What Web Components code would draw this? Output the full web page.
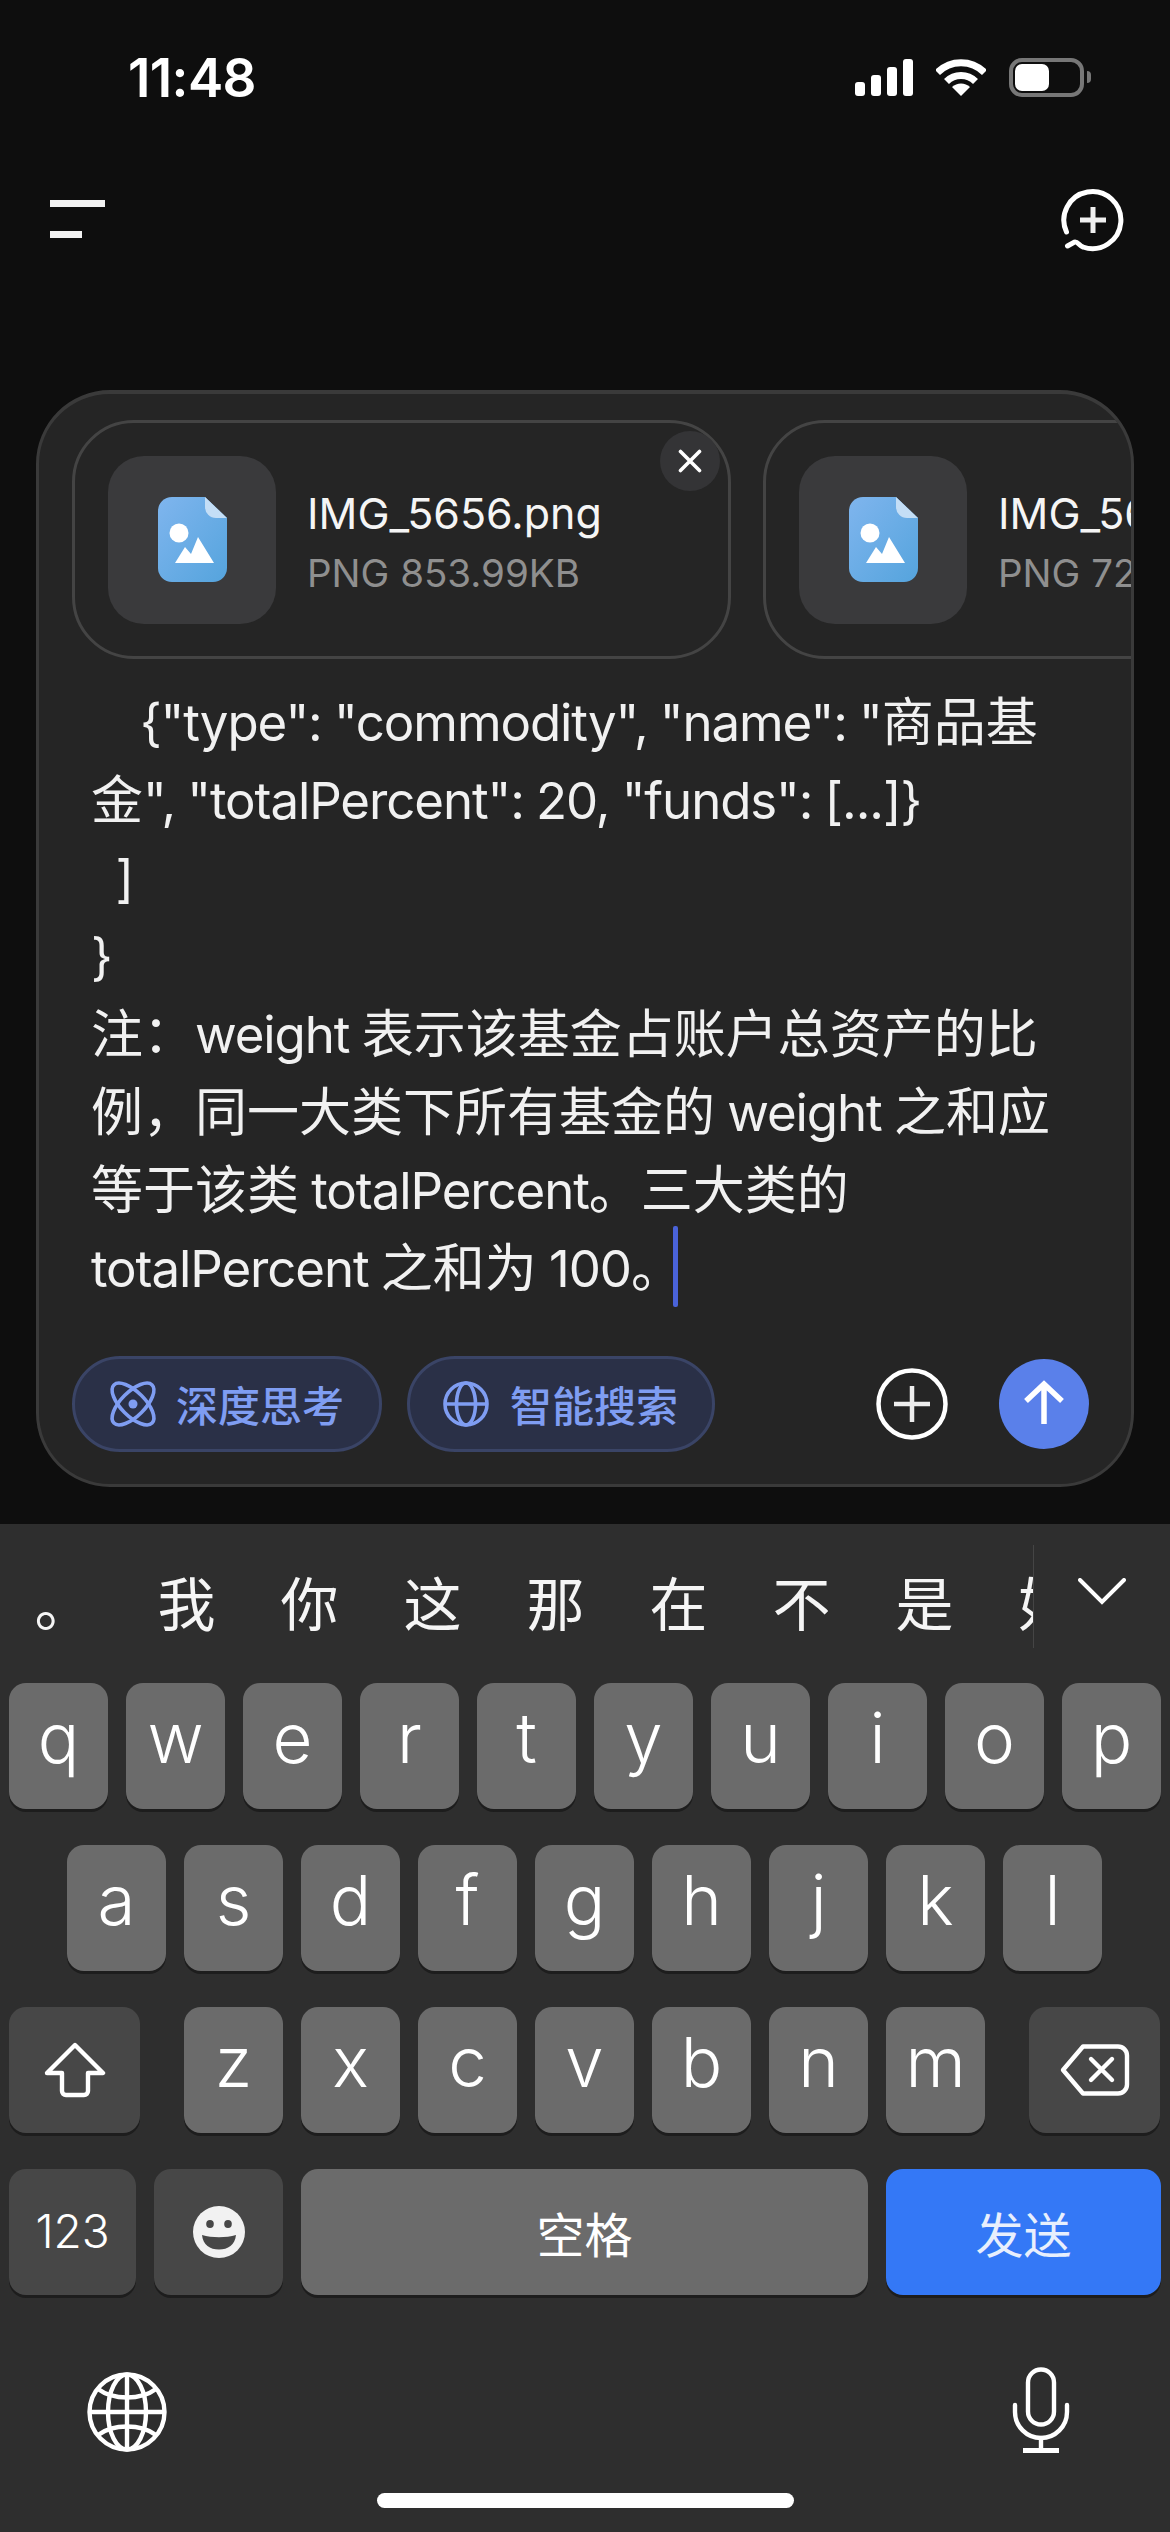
<!DOCTYPE html>
<html lang="zh">
<head>
<meta charset="utf-8">
<title>Chat composer</title>
<style>
  html, body { margin: 0; background: #0e0e0e; }
  body {
    width: 1170px;
    height: 2532px;
    overflow: hidden;
    display: flex;
    flex-direction: column;
    font-family: Inter, "Noto Sans CJK SC", sans-serif;
    color: #fff;
  }
</style>
</head>
<body>
<status-bar time="11:48"></status-bar>
<top-nav></top-nav>
<chat-composer>
  <file-card slot="files" name="IMG_5656.png" meta="PNG 853.99KB" closable></file-card>
  <file-card slot="files" name="IMG_5657.png" meta="PNG 723.41KB"></file-card>
  <tool-chip slot="tools" icon="atom" style="--w:310px">深度思考</tool-chip>
  <tool-chip slot="tools" icon="globe" style="--w:308px">智能搜索</tool-chip>
</chat-composer>
<soft-keyboard></soft-keyboard>

<script>
const promptLines = [
  '    {"type": "commodity", "name": "商品基',
  '金", "totalPercent": 20, "funds": [...]}',
  '  ]',
  '}',
  '注：weight 表示该基金占账户总资产的比',
  '例，同一大类下所有基金的 weight 之和应',
  '等于该类 totalPercent。三大类的',
  'totalPercent 之和为 100。'
];

const icons = {
  atom: `<svg width="44" height="44" viewBox="0 0 44 44" fill="none" stroke="currentColor" stroke-width="3.6">
    <ellipse cx="22" cy="22" rx="27" ry="12" transform="rotate(45 22 22)"/>
    <ellipse cx="22" cy="22" rx="27" ry="12" transform="rotate(-45 22 22)"/>
    <circle cx="22" cy="22" r="4.5" fill="currentColor" stroke="none"/></svg>`,
  globe: `<svg width="46" height="46" viewBox="0 0 46 46" fill="none" stroke="currentColor" stroke-width="3.6">
    <circle cx="23" cy="23" r="21"/><ellipse cx="23" cy="23" rx="9.5" ry="21"/><path d="M2 23h42"/></svg>`,
  earth: `<svg width="80" height="80" viewBox="0 0 80 80" fill="none" stroke="#fff" stroke-width="4.4">
    <circle cx="40" cy="40" r="37.5"/><ellipse cx="40" cy="40" rx="19" ry="37.5"/><path d="M40 2.5v75M2.5 40h75"/>
    <path d="M11 17c8 6 18 8.5 29 8.5s21-2.5 29-8.5M11 63c8-6 18-8.5 29-8.5s21 2.5 29 8.5"/></svg>`,
  mic: `<svg width="58" height="86" viewBox="0 0 58 86" fill="none" stroke="#fff" stroke-width="4.4" stroke-linecap="round">
    <rect x="16" y="2.5" width="26" height="55" rx="13"/><path d="M3 38v7a26 26 0 0 0 52 0v-7"/>
    <path d="M29 71v12"/><path d="M11 83.5h36" stroke-width="4.8" stroke-linecap="butt"/></svg>`,
  shift: `<svg width="62" height="56" viewBox="0 0 62 56" fill="none" stroke="#fff" stroke-width="4.4" stroke-linejoin="round">
    <path d="M31 3 59 31H44V49a4 4 0 0 1-4 4H22a4 4 0 0 1-4-4V31H3Z"/></svg>`,
  del: `<svg width="70" height="52" viewBox="0 0 70 52" fill="none" stroke="#fff" stroke-width="4.4" stroke-linecap="round" stroke-linejoin="round">
    <path d="M23 2.5H58a9 9 0 0 1 9 9v29a9 9 0 0 1-9 9H23L3 26Z"/><path d="M31 15l21 21M52 15 31 36"/></svg>`,
  smile: `<svg width="52" height="52" viewBox="0 0 52 52"><circle cx="26" cy="26" r="26" fill="#f2f2f2"/>
    <ellipse cx="17" cy="18" rx="3.8" ry="4" fill="#474747"/><ellipse cx="35" cy="18" rx="3.8" ry="4" fill="#474747"/>
    <path d="M9 29c10 3 24 3 34 0-1 10-8 14.5-17 14.5S10 39 9 29Z" fill="#474747"/></svg>`
};

class StatusBar extends HTMLElement {
  connectedCallback() {
    if (this.shadowRoot) return;
    this.attachShadow({ mode: 'open' }).innerHTML = `
      <style>
        :host { display: flex; align-items: center; height: 154px; flex: none; padding: 0 79px 0 128px; box-sizing: border-box; }
        .time { font: 600 53px/1 Inter, sans-serif; letter-spacing: -0.6px; margin: 2px auto 0 0; color: #fff; }
        .icons { display: flex; align-items: center; }
        svg { display: block; }
        .wifi { margin: 0 23px; }
        .battery { width: 75px; height: 39px; box-sizing: border-box; border: 4px solid #777; border-radius: 13px; padding: 2px; }
        .battery i { display: block; width: 34px; height: 27px; background: #fff; border-radius: 7px; }
        .nub { width: 4px; height: 12px; margin-left: 3px; background: #777; border-radius: 0 4px 4px 0; }
      </style>
      <span class="time">${this.getAttribute('time')}</span>
      <div class="icons">
        <svg width="58" height="37" viewBox="0 0 58 37" fill="#fff">
          <rect x="0" y="23" width="10" height="14" rx="3"/><rect x="16" y="16" width="10" height="21" rx="3"/>
          <rect x="32" y="8" width="10" height="29" rx="3"/><rect x="48" y="0" width="10" height="37" rx="3"/>
        </svg>
        <svg class="wifi" width="50" height="38" viewBox="0 0 50 38" fill="none" stroke="#fff" stroke-width="7">
          <path d="M1.5 14.5a33 33 0 0 1 47 0M10.5 23.5a20.5 20.5 0 0 1 29 0"/>
          <path d="M25 38 16 29a13 13 0 0 1 18 0Z" fill="#fff" stroke="none"/>
        </svg>
        <div class="battery"><i></i></div><div class="nub"></div>
      </div>`;
  }
}

class TopNav extends HTMLElement {
  connectedCallback() {
    if (this.shadowRoot) return;
    this.attachShadow({ mode: 'open' }).innerHTML = `
      <style>
        :host { display: flex; justify-content: space-between; align-items: flex-start; flex: none; height: 236px; padding: 34px 45px 0 50px; box-sizing: border-box; }
        .menu { display: flex; flex-direction: column; gap: 24px; margin-top: 12px; }
        .menu i { display: block; height: 7px; width: 55px; background: #f2f2f2; }
        .menu i + i { width: 32px; }
        svg { display: block; }
      </style>
      <div class="menu"><i></i><i></i></div>
      <svg width="64" height="64" viewBox="0 0 64 64" fill="none" stroke="#fff" stroke-width="5" stroke-linecap="round">
        <path d="M5.5 44A28.5 28.5 0 1 1 22 59C18.5 58 16.5 53 13.5 54L6.5 58"/>
        <path d="M19 32h26M32 19v26" stroke="#f0f0f0" stroke-linecap="butt"/>
      </svg>`;
  }
}

class FileCard extends HTMLElement {
  connectedCallback() {
    if (this.shadowRoot) return;
    const close = this.hasAttribute('closable') ? `
      <span class="close"><svg width="24" height="24" viewBox="0 0 24 24" stroke="#fff" stroke-width="3.6" stroke-linecap="round"><path d="M2.5 2.5l19 19M21.5 2.5l-19 19"/></svg></span>` : '';
    const gradientId = `g${Math.random().toString(36).slice(2, 8)}`;
    this.attachShadow({ mode: 'open' }).innerHTML = `
      <style>
        :host { position: relative; display: flex; align-items: center; flex: none; width: 659px; height: 239px; box-sizing: border-box; padding: 0 33px; gap: 31px; border: 3px solid #444; border-radius: 62px; }
        .thumb { width: 168px; height: 168px; flex: none; display: flex; align-items: center; justify-content: center; background: #3a3a3c; border-radius: 36px; }
        .copy { padding-top: 6px; }
        .name { font: 400 43px/60px Inter, sans-serif; color: #f5f5f5; white-space: nowrap; }
        .meta { font: 400 38.5px/60px Inter, sans-serif; color: #8f8f8f; white-space: nowrap; }
        .close { position: absolute; top: 8px; right: 8px; width: 60px; height: 60px; border-radius: 50%; background: #343436; display: flex; align-items: center; justify-content: center; }
        svg { display: block; }
      </style>
      <div class="thumb">
        <svg width="69" height="85" viewBox="0 0 69 85">
          <defs><linearGradient id="${gradientId}" x1="0" y1="0" x2="1" y2="1"><stop offset="0" stop-color="#7fb5ee"/><stop offset="1" stop-color="#55a4dd"/></linearGradient></defs>
          <path d="M14 0H47L69 21V71a14 14 0 0 1-14 14H14A14 14 0 0 1 0 71V14A14 14 0 0 1 14 0Z" fill="url(#${gradientId})"/>
          <path d="M47 0 69 21H58A11 11 0 0 1 47 10Z" fill="#c4def6"/>
          <circle cx="21" cy="36" r="9.5" fill="#fff"/>
          <path d="M17 66 27 50 33 57 40 40 56 66Z" fill="#fff"/>
        </svg>
      </div>
      <div class="copy"><div class="name">${this.getAttribute('name')}</div><div class="meta">${this.getAttribute('meta')}</div></div>${close}`;
  }
}

class ToolChip extends HTMLElement {
  connectedCallback() {
    if (this.shadowRoot) return;
    const icon = this.getAttribute('icon');
    this.attachShadow({ mode: 'open' }).innerHTML = `
      <style>
        :host { display: flex; align-items: center; gap: 21px; flex: none; width: var(--w); height: 96px; box-sizing: border-box; padding-left: ${icon === 'atom' ? 36 : 33}px; border: 3px solid #3a4466; border-radius: 48px; background: #2a3047; color: #7f9df2; font: 500 42px/1.2 "Noto Sans CJK SC", sans-serif; }
        svg { display: block; overflow: visible; }
        span { display: flex; }
      </style>
      <span>${icons[icon]}</span><slot></slot>`;
  }
}

class ChatComposer extends HTMLElement {
  connectedCallback() {
    if (this.shadowRoot) return;
    const lines = promptLines.map((line, index) => {
      const caret = index === promptLines.length - 1 ? '<i class="caret"></i>' : '';
      const marked = line.replace(/[\u3000-\u9fff\uff00-\uffef]+/g, (run) => `<b>${run}</b>`);
      return `<div class="line">${marked}${caret}</div>`;
    }).join('');
    this.attachShadow({ mode: 'open' }).innerHTML = `
      <style>
        :host { display: block; flex: none; width: 1098px; height: 1097px; margin: 0 0 37px 36px; box-sizing: border-box; border: 3px solid #3a3a3a; border-top-width: 4px; border-radius: 74px; background: #252525; overflow: hidden; }
        .files { display: flex; gap: 32px; padding: 26px 0 0 33px; overflow: hidden; }
        .prompt { padding: 25px 0 0 52px; height: 624px; font: 400 51px/78px Inter, "Noto Sans CJK SC", sans-serif; color: #f1f1f1; letter-spacing: -1.1px; word-spacing: -1px; }
        .line { white-space: pre; height: 78px; }
        b { font: 400 52px/0 "Noto Sans CJK SC", sans-serif; letter-spacing: 0; }
        .caret { display: inline-block; width: 5px; height: 81px; margin: -17px 0 -3px -10px; vertical-align: middle; background: #4a63d9; border-radius: 2px; }
        .bar { display: flex; align-items: center; gap: 25px; padding: 48px 42px 0 33px; }
        .actions { display: flex; align-items: center; gap: 51px; margin-left: auto; }
        svg { display: block; }
      </style>
      <div class="files"><slot name="files"></slot></div>
      <div class="prompt">${lines}</div>
      <div class="bar">
        <slot name="tools"></slot>
        <div class="actions">
          <svg width="72" height="72" viewBox="0 0 72 72" fill="none" stroke="#fff" stroke-width="4.5"><circle cx="36" cy="36" r="33.5"/><path d="M18 36h36M36 18v36" stroke="#eee"/></svg>
          <svg width="90" height="90" viewBox="0 0 90 90" fill="none"><circle cx="45" cy="45" r="45" fill="#5a80ea"/><path d="M45 65V28M27 42 45 25 63 42" stroke="#fff" stroke-width="5.5" stroke-linejoin="miter"/></svg>
        </div>
      </div>`;
  }
}

class KbKey extends HTMLElement {
  connectedCallback() {
    if (this.shadowRoot) return;
    this.attachShadow({ mode: 'open' }).innerHTML = `
      <style>
        :host { display: flex; align-items: center; justify-content: center; flex: none; box-sizing: border-box; width: var(--w, 99px); height: 126px; border-radius: 17px; background: #6b6b6b; box-shadow: 0 3px 0 #1d1d1d; color: #fff; font: 300 69px/1.3 Inter, sans-serif; padding-bottom: 14px; }
        :host([tone="dark"]) { background: #474747; padding-bottom: 0; }
        :host([tone="blue"]) { background: #3478f6; color: #e8effd; padding-bottom: 0; font: 400 48px/1.3 "Noto Sans CJK SC", sans-serif; }
        :host([label]) { padding-bottom: 0; font: 400 48px/1.3 "Noto Sans CJK SC", sans-serif; }
        :host([digits]) { font: 300 46px/1.3 Inter, sans-serif; }
        ::slotted(svg) { display: block; }
      </style>
      <slot></slot>`;
  }
}

class SoftKeyboard extends HTMLElement {
  connectedCallback() {
    if (this.shadowRoot) return;
    const letters = (word) => [...word].map((letter) => `<kb-key>${letter}</kb-key>`).join('');
    const candidates = ['。', '我', '你', '这', '那', '在', '不', '是', '好']
      .map((word) => `<span>${word}</span>`).join('');
    this.attachShadow({ mode: 'open' }).innerHTML = `
      <style>
        :host { display: flex; flex-direction: column; flex: none; height: 1008px; background: #2e2e2e; }
        .candidates { display: flex; align-items: center; height: 159px; flex: none; }
        .list { display: flex; width: 1033px; padding-left: 2px; box-sizing: border-box; overflow: hidden; font: 400 58px/1.55 "Noto Sans CJK SC", sans-serif; color: #f5f5f5; margin-top: -4px; }
        .list span { flex: none; width: 123px; text-align: center; }
        .more { flex: 1; align-self: flex-start; height: 103px; margin-top: 21px; border-left: 1px solid #454545; display: flex; justify-content: flex-end; padding-right: 44px; padding-top: 33px; box-sizing: border-box; }
        .rows { display: flex; flex-direction: column; gap: 36px; padding: 0 9px; }
        .row { display: flex; gap: 18px; }
        .home { display: flex; justify-content: space-between; align-items: flex-start; height: 198px; padding: 72px 100px 0 87px; box-sizing: border-box; flex: none; }
        .home svg { display: block; }
        .home svg:first-child { margin-top: 5px; }
        .indicator { width: 417px; height: 15px; margin: 0 auto; background: #fff; border-radius: 8px; }
      </style>
      <div class="candidates">
        <div class="list">${candidates}</div>
        <div class="more"><svg width="48" height="27" viewBox="0 0 48 27" fill="none" stroke="#fff" stroke-width="4" stroke-linecap="round"><path d="M2 2 24 24 46 2"/></svg></div>
      </div>
      <div class="rows">
        <div class="row">${letters('qwertyuiop')}</div>
        <div class="row" style="padding-left:58px">${letters('asdfghjkl')}</div>
        <div class="row">
          <kb-key tone="dark" style="--w:131px;margin-right:26px">${icons.shift}</kb-key>
          ${letters('zxcvbnm')}
          <kb-key tone="dark" style="--w:131px;margin-left:26px">${icons.del}</kb-key>
        </div>
        <div class="row">
          <kb-key tone="dark" digits style="--w:127px">123</kb-key>
          <kb-key tone="dark" style="--w:129px">${icons.smile}</kb-key>
          <kb-key label style="--w:567px">空格</kb-key>
          <kb-key tone="blue" style="--w:275px">发送</kb-key>
        </div>
      </div>
      <div class="home">${icons.earth}${icons.mic}</div>
      <div class="indicator"></div>`;
  }
}

customElements.define('status-bar', StatusBar);
customElements.define('top-nav', TopNav);
customElements.define('file-card', FileCard);
customElements.define('tool-chip', ToolChip);
customElements.define('chat-composer', ChatComposer);
customElements.define('kb-key', KbKey);
customElements.define('soft-keyboard', SoftKeyboard);
</script>
</body>
</html>
